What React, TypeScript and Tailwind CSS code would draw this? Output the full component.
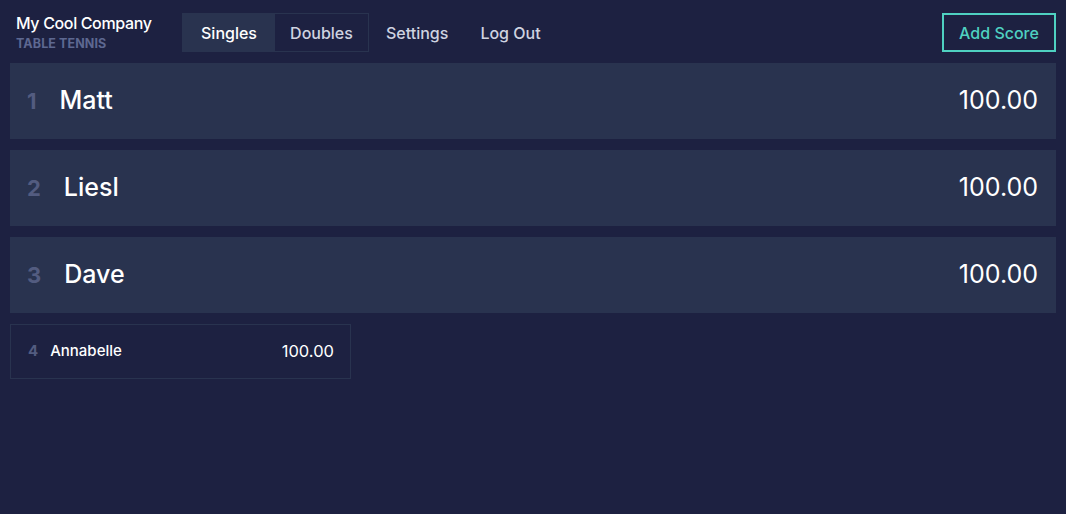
import { FC } from 'react'

type Player = { rank: number; name: string; score: string }

const players: Player[] = [
  { rank: 1, name: 'Matt', score: '100.00' },
  { rank: 2, name: 'Liesl', score: '100.00' },
  { rank: 3, name: 'Dave', score: '100.00' },
  { rank: 4, name: 'Annabelle', score: '100.00' },
]

const Header: FC = () => (
  <header className="flex items-center justify-between pl-4 pr-[10px] pt-[13px] pb-[11px]">
    <div className="flex items-center">
      <div className="w-[166px]">
        <div className="text-[16px] leading-5 font-medium text-white tracking-[-0.35px]">My Cool Company</div>
        <div className="mt-[3px] text-[12.5px] leading-4 font-bold text-[#5d6891] uppercase tracking-[0.1px]">Table Tennis</div>
      </div>
      <nav className="flex items-center text-[16px] font-medium">
        <div className="flex h-[39px] bg-[#29334f] p-px">
          <button className="w-[92px] text-white">Singles</button>
          <button className="w-[93px] bg-[#1d2141] text-[#cfd3e0]">Doubles</button>
        </div>
        <a className="ml-[17px] text-[#cfd3e0]">Settings</a>
        <a className="ml-[32px] text-[#cfd3e0]">Log Out</a>
      </nav>
    </div>
    <button className="h-[39px] w-[114px] border-2 border-[#4fd1c1] text-[16px] font-medium text-[#4fd1c1]">
      Add Score
    </button>
  </header>
)

const BigRow: FC<{ p: Player }> = ({ p }) => (
  <div className="flex h-[76px] items-center bg-[#29334f] pl-[17px] pr-[18px]">
    <span className="mr-[23px] text-[22px] font-bold text-[#535c80]">{p.rank}</span>
    <span className="flex-1 text-[25px] font-medium text-white">{p.name}</span>
    <span className="text-[25px] text-white">{p.score}</span>
  </div>
)

const SmallRow: FC<{ p: Player }> = ({ p }) => (
  <div className="flex h-[55px] w-[341px] items-center border border-[#29334f] pl-[17px] pr-[16px]">
    <span className="mr-[12px] text-[15px] font-bold text-[#535c80]">{p.rank}</span>
    <span className="flex-1 text-[15px] font-medium text-white">{p.name}</span>
    <span className="text-[16.5px] text-white">{p.score}</span>
  </div>
)

export default function App() {
  return (
    <div className="min-h-[514px] bg-[#1d2141] font-['Inter',sans-serif]">
      <Header />
      <main className="flex flex-col gap-[11px] px-[10px]">
        {players.slice(0, 3).map((p) => (
          <BigRow key={p.rank} p={p} />
        ))}
        <SmallRow p={players[3]} />
      </main>
    </div>
  )
}
